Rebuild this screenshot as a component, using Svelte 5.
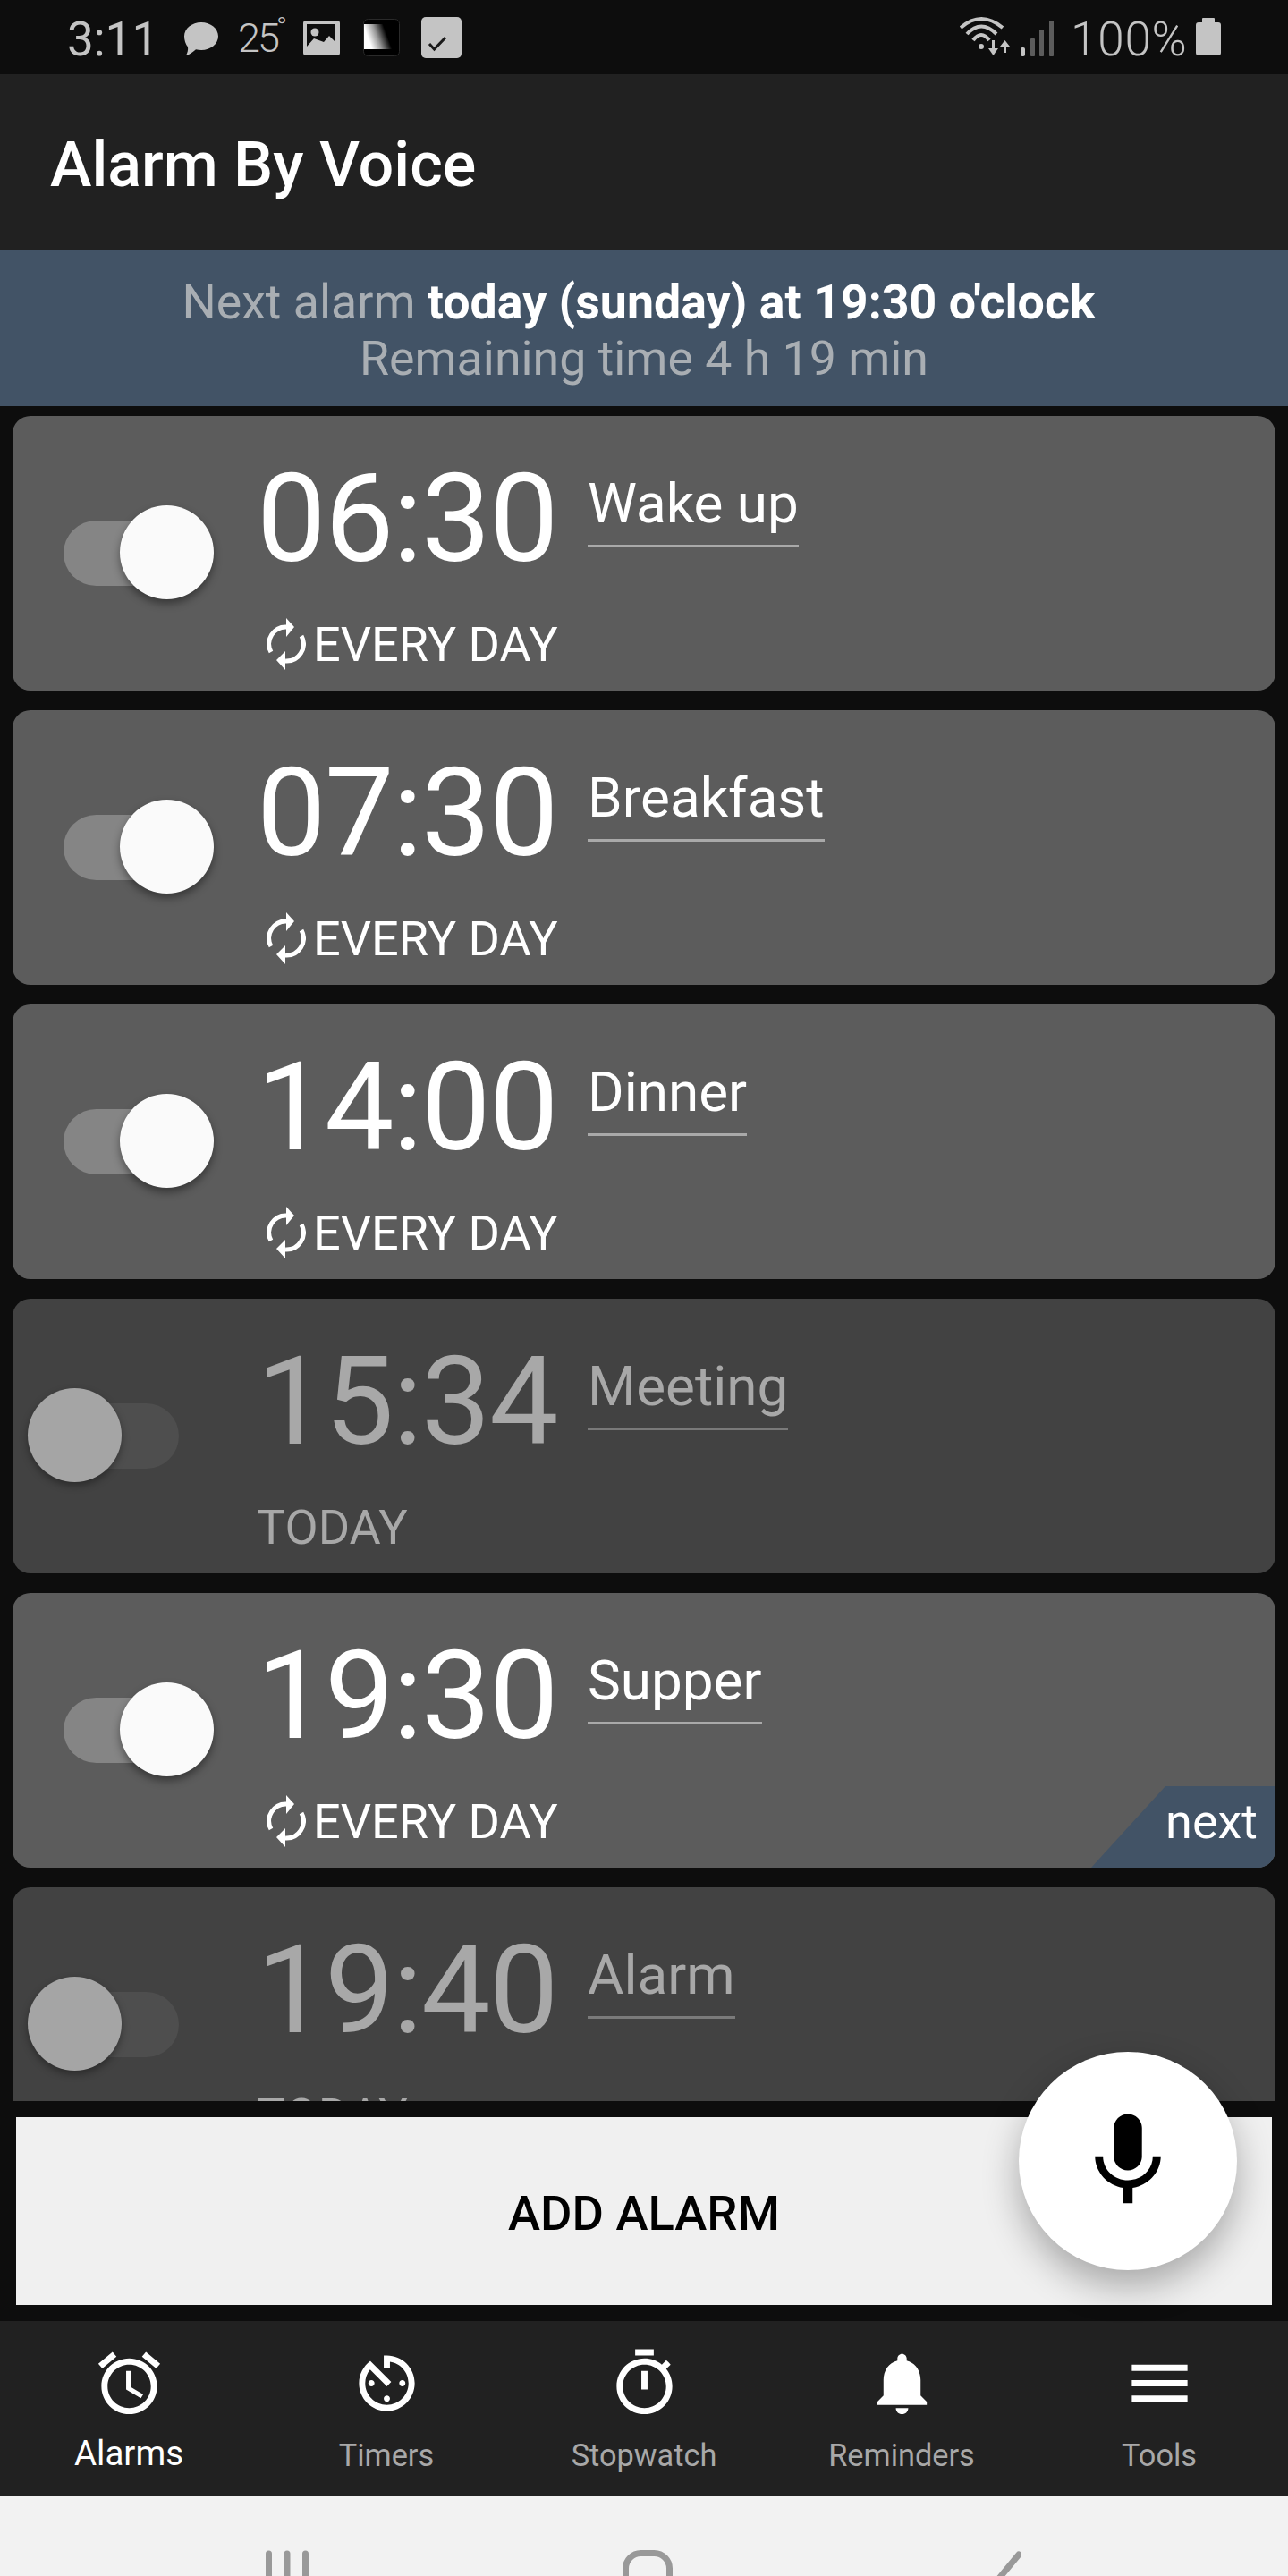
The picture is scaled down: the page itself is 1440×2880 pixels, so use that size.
<script>
  const alarms = [
    { time: '06:30', label: 'Wake up', on: true, repeat: true },
    { time: '07:30', label: 'Breakfast', on: true, repeat: true },
    { time: '14:00', label: 'Dinner', on: true, repeat: true },
    { time: '15:34', label: 'Meeting', on: false, repeat: false },
    { time: '19:30', label: 'Supper', on: true, repeat: true, next: true },
    { time: '19:40', label: 'Alarm', on: false, repeat: false }
  ];
  const tabs = [
    { name: 'Alarms', active: true, d: 'M22 5.72l-4.6-3.86-1.29 1.53 4.6 3.86L22 5.72zM7.88 3.39L6.6 1.86 2 5.71l1.29 1.53 4.59-3.85zM12.5 8H11v6l4.75 2.85.75-1.23-4-2.37V8zM12 4c-4.97 0-9 4.03-9 9s4.03 9 9 9 9-4.03 9-9-4.03-9-9-9zm0 16c-3.87 0-7-3.13-7-7s3.13-7 7-7 7 3.13 7 7-3.13 7-7 7z' },
    { name: 'Timers', d: 'M11 17c0 .55.45 1 1 1s1-.45 1-1-.45-1-1-1-1 .45-1 1zm0-14v4h2V5.08c3.39.49 6 3.39 6 6.92 0 3.87-3.13 7-7 7s-7-3.13-7-7c0-1.68.59-3.22 1.58-4.42L12 13l1.41-1.41-6.8-6.8v.02C4.42 6.45 3 9.05 3 12c0 4.97 4.02 9 9 9 4.97 0 9-4.03 9-9s-4.03-9-9-9h-1zm7 9c0-.55-.45-1-1-1s-1 .45-1 1 .45 1 1 1 1-.45 1-1zM6 12c0 .55.45 1 1 1s1-.45 1-1-.45-1-1-1-1 .45-1 1z' },
    { name: 'Stopwatch', d: 'M15 1H9v2h6V1zm-4 13h2V8h-2v6zm8.03-6.61l1.42-1.42c-.43-.51-.9-.99-1.41-1.41l-1.42 1.42C16.07 4.74 14.12 4 12 4c-4.97 0-9 4.03-9 9s4.02 9 9 9 9-4.03 9-9c0-2.12-.74-4.07-1.97-5.61zM12 20c-3.87 0-7-3.13-7-7s3.13-7 7-7 7 3.13 7 7-3.13 7-7 7z' },
    { name: 'Reminders', d: 'M12 22c1.1 0 2-.9 2-2h-4c0 1.1.89 2 2 2zm6-6v-5c0-3.07-1.64-5.64-4.5-6.32V4c0-.83-.67-1.5-1.5-1.5s-1.5.67-1.5 1.5v.68C7.63 5.36 6 7.92 6 11v5l-2 2v1h16v-1l-2-2z' },
    { name: 'Tools', d: 'M3 18h18v-2H3v2zm0-5h18v-2H3v2zm0-7v2h18V6H3z' }
  ];
</script>

<div class="app">
  <header class="status">
    <span class="st-time">3:11</span>
    <svg class="i-bubble" viewBox="0 0 38 37"><path d="M19 0c10.5 0 19 7 19 15.5S29.500 31 19 31c-2 0-4-.3-6-.8C10 33 6 36 2 37c1.500-3 2.500-6 2-9.500C1.500 24.500 0 20 0 15.500 0 7 8.500 0 19 0z" /></svg>
    <span class="st-temp">25<span class="deg">°</span></span>
    <svg class="i-image" viewBox="0 0 41 39"><rect width="41" height="39" rx="3" fill="#c4c4c4" /><path d="M4 4h32v20l-7-7-6 7-11-4-8 9z" fill="#0d0d0d" /><circle cx="13" cy="13" r="4.500" fill="#c4c4c4" /></svg>
    <svg class="i-contrast" viewBox="0 0 41 42"><defs><linearGradient id="cg" x1="0.1" y1="0.55" x2="0.75" y2="0.35"><stop offset="0.05" stop-color="#fff" /><stop offset="0.5" stop-color="#999" /><stop offset="1" stop-color="#000" /></linearGradient></defs><rect x="0.500" y="0.500" width="40" height="41" rx="5" fill="#000" stroke="#2a2a2a" /><rect x="1" y="6" width="33" height="28" fill="url(#cg)" /></svg>
    <svg class="i-check" viewBox="0 0 45 46"><rect width="45" height="46" rx="5" fill="#c4c4c4" /><path d="M9 30l5.500 6L27 23" fill="none" stroke="#1a1a1a" stroke-width="3" /></svg>
    <div class="st-right">
      <svg class="i-wifi" viewBox="0 0 60 46"><g fill="none" stroke="#c4c4c4" stroke-width="4"><path d="M1 13Q24-7 48 13" /><path d="M8 20Q24 3 41 20" /><path d="M15 27Q24 15 33 27" /></g><circle cx="24" cy="34" r="3" fill="#c4c4c4" /><path d="M36 27h3v9h4l-5.500 8-5.500-8h4zM50.500 27l5.500 7h-4v7h-3v-7h-4z" fill="#c4c4c4" /></svg>
      <svg class="i-signal" viewBox="0 0 39 40"><rect x="1" y="30" width="5" height="10" rx="2" fill="#c4c4c4" /><rect x="12" y="20" width="5" height="20" rx="1" fill="#5c5c5c" /><rect x="22" y="10" width="5" height="30" rx="1" fill="#5c5c5c" /><rect x="33" y="0" width="5" height="40" rx="1" fill="#5c5c5c" /></svg>
      <span class="st-pct">100%</span>
      <svg class="i-batt" viewBox="0 0 28 42"><path d="M8 0h12a1 1 0 0 1 1 1v4h4a3 3 0 0 1 3 3v31a3 3 0 0 1-3 3H3a3 3 0 0 1-3-3V8a3 3 0 0 1 3-3h4V1a1 1 0 0 1 1-1z" fill="#c4c4c4" /></svg>
    </div>
  </header>

  <div class="appbar"><h1>Alarm By Voice</h1></div>

  <div class="banner">
    <div class="line-one">Next alarm <strong>today (sunday) at 19:30 o'clock</strong></div>
    <div>Remaining time 4 h 19 min</div>
  </div>

  <main class="list">
    {#each alarms as a}
      <article class="card" class:off={!a.on}>
        <div class="toggle">
          <span class="track"></span>
          <span class="knob"></span>
        </div>
        <div class="body">
          <div class="top">
            <span class="time">{a.time}</span>
            <span class="label">{a.label}</span>
          </div>
          <div class="when">
            {#if a.repeat}
              <svg class="repeat" viewBox="0 0 44 58">
                <g fill="none" stroke="#fff" stroke-width="5">
                  <path d="M5 38A19 19 0 0 1 23 10" />
                  <path d="M39 20A19 19 0 0 1 21 48" />
                </g>
                <path d="M22 0l9 10-9 11zM21 37l-10 10 10 11z" fill="#fff" />
              </svg>
              <span>EVERY DAY</span>
            {:else}
              <span>TODAY</span>
            {/if}
          </div>
        </div>
        {#if a.next}<div class="next">next</div>{/if}
      </article>
    {/each}
  </main>

  <div class="add"><button>ADD ALARM</button></div>

  <nav class="tabs">
    {#each tabs as t}
      <div class="tab" class:active={t.active}>
        <svg viewBox="0 0 24 24"><path d={t.d} fill="#fff" /></svg>
        <span>{t.name}</span>
      </div>
    {/each}
  </nav>

  <div class="sysnav">
    <svg class="s-recent" viewBox="0 0 48 40"><g stroke="#999" stroke-width="7" stroke-linecap="round"><path d="M3.500 4v40M24 4v40M44.500 4v40" /></g></svg>
    <svg class="s-home" viewBox="0 0 56 40"><rect x="3.500" y="3.500" width="49" height="60" rx="17" fill="none" stroke="#999" stroke-width="7" /></svg>
    <svg class="s-back" viewBox="0 0 30 40"><path d="M27 5L3 34" fill="none" stroke="#999" stroke-width="7" stroke-linecap="round" /></svg>
  </div>

  <button class="fab" aria-label="Voice">
    <svg viewBox="0 0 24 24"><path d="M12 14c1.660 0 2.990-1.340 2.990-3L15 5c0-1.660-1.340-3-3-3S9 3.340 9 5v6c0 1.660 1.340 3 3 3zm5.300-3c0 3-2.540 5.100-5.300 5.100S6.700 14 6.700 11H5c0 3.410 2.720 6.230 6 6.720V21h2v-3.280c3.280-.48 6-3.300 6-6.720h-1.700z" fill="#000" /></svg>
  </button>
</div>

<style>
  :global(body) { margin: 0; background: #0d0d0d; }
  .app {
    position: relative;
    width: 1440px;
    height: 2880px;
    overflow: hidden;
    background: #0d0d0d;
    font-family: Roboto, "Liberation Sans", sans-serif;
    display: flex;
    flex-direction: column;
  }

  /* status bar */
  .status {
    height: 83px;
    flex: none;
    display: flex;
    align-items: flex-start;
    padding: 0 75px;
    box-sizing: border-box;
    color: #c4c4c4;
    font-weight: 400;
  }
  .st-time { width: 131px; margin-top: 14px; font-size: 53px; line-height: 60px; }
  .i-bubble { width: 38px; height: 37px; margin-top: 25px; fill: #c4c4c4; }
  .st-temp { width: 73px; margin: 13px 0 0 22px; font-size: 45px; line-height: 60px; letter-spacing: -3px; font-weight: 300; white-space: nowrap; }
  .deg { position: relative; top: -17px; margin-left: -1px; font-size: 32px; letter-spacing: 0; }
  .i-image { width: 41px; height: 39px; margin-top: 23px; }
  .i-contrast { width: 41px; height: 42px; margin: 21px 0 0 26px; }
  .i-check { width: 45px; height: 46px; margin: 19px 0 0 24px; }
  .st-right { margin-left: auto; display: flex; align-items: flex-start; }
  .i-wifi { width: 60px; height: 46px; margin-top: 18px; }
  .i-signal { width: 39px; height: 40px; margin: 23px 0 0 7px; }
  .st-pct { width: 140px; margin: 14px 0 0 18px; font-size: 53px; line-height: 60px; font-weight: 300; letter-spacing: 0.8px; }
  .i-batt { width: 28px; height: 42px; margin-top: 20px; }

  .appbar {
    height: 196px;
    flex: none;
    background: #212121;
    display: flex;
    align-items: center;
    padding: 6px 0 0 56px;
    box-sizing: border-box;
  }
  h1 { margin: 0; color: #fff; font-size: 70px; font-weight: 500; line-height: 80px; }

  .banner {
    height: 175px;
    flex: none;
    background: #425366;
    box-sizing: border-box;
    padding-top: 27px;
    text-align: center;
    color: #a9aeb3;
    font-size: 53.700px;
    line-height: 63px;
    font-weight: 400;
  }
  .line-one { padding-right: 12px; }
  strong { color: #fff; font-weight: 700; }

  .list {
    height: 1895px;
    flex: none;
    overflow: hidden;
    box-sizing: border-box;
    padding: 11px 14px 0;
    display: flex;
    flex-direction: column;
    gap: 22px;
  }
  .card {
    position: relative;
    flex: none;
    height: 307px;
    border-radius: 20px;
    overflow: hidden;
    background: #5c5c5c;
    color: #fff;
    display: flex;
  }
  .card.off { background: #424242; color: #a8a8a8; }

  .toggle { position: relative; width: 273px; flex: none; }
  .track {
    position: absolute;
    left: 57px;
    top: 117px;
    width: 129px;
    height: 73px;
    border-radius: 37px;
    background: #858585;
  }
  .knob {
    position: absolute;
    left: 120px;
    top: 100px;
    width: 105px;
    height: 105px;
    border-radius: 50%;
    background: #fafafa;
    box-shadow: 0 5px 10px rgba(0, 0, 0, 0.4);
  }
  .off .track { background: #4e4e4e; }
  .off .knob { left: 17px; background: #a5a5a5; box-shadow: 0 4px 8px rgba(0, 0, 0, 0.35); }

  .body { flex: 1; }
  .top { display: flex; align-items: flex-start; height: 225px; }
  .time {
    width: 370px;
    margin-top: 45px;
    font-size: 138px;
    line-height: 140px;
    font-weight: 400;
    letter-spacing: -1.500px;
  }
  .label {
    margin-top: 62px;
    font-size: 62px;
    line-height: 71px;
    font-weight: 400;
    padding-bottom: 11px;
    border-bottom: 3px solid #a9a9a9;
  }
  .off .label { border-bottom-color: #7a7a7a; }
  .when {
    display: flex;
    align-items: center;
    height: 60px;
    font-size: 54px;
    font-weight: 400;
  }
  .repeat { width: 44px; height: 58px; margin: 0 8px 0 11px; }

  .next {
    position: absolute;
    right: 0;
    bottom: 0;
    width: 206px;
    height: 91px;
    box-sizing: border-box;
    padding: 10px 20px 0 0;
    background: #425366;
    clip-path: polygon(83px 0, 100% 0, 100% 100%, 0 100%);
    color: #fff;
    font-size: 54px;
    line-height: 60px;
    text-align: right;
  }

  .add { padding: 18px; flex: none; }
  .add button {
    display: block;
    width: 100%;
    height: 210px;
    border: 0;
    padding: 6px 0 0;
    background: #f0f0f0;
    color: #000;
    font: 500 54.300px/60px Roboto, sans-serif;
  }

  .tabs {
    height: 196px;
    flex: none;
    background: #212121;
    display: grid;
    grid-template-columns: repeat(5, 1fr);
  }
  .tab {
    display: flex;
    flex-direction: column;
    align-items: center;
    padding-top: 28px;
    color: #a8a8a8;
    font-size: 34.300px;
    line-height: 50px;
  }
  .tab svg { width: 83px; height: 83px; }
  .tab span { margin-top: 14px; }
  .tab.active { color: #fff; font-size: 38.500px; }
  .tab.active span { margin-top: 12px; }

  .sysnav {
    flex: 1;
    background: #f2f2f2;
    display: flex;
    align-items: flex-start;
    padding: 60px 0 0 297px;
    box-sizing: border-box;
  }
  .s-recent { width: 48px; height: 40px; }
  .s-home { width: 56px; height: 40px; margin-left: 351px; }
  .s-back { width: 30px; height: 40px; margin-left: 360px; }

  .fab {
    position: absolute;
    left: 1139px;
    top: 2294px;
    width: 244px;
    height: 244px;
    border: 0;
    padding: 0;
    border-radius: 50%;
    background: #fff;
    box-shadow: 0 18px 40px rgba(0, 0, 0, 0.3);
    display: flex;
    align-items: center;
    justify-content: center;
  }
  .fab svg { width: 126px; height: 126px; }
</style>
